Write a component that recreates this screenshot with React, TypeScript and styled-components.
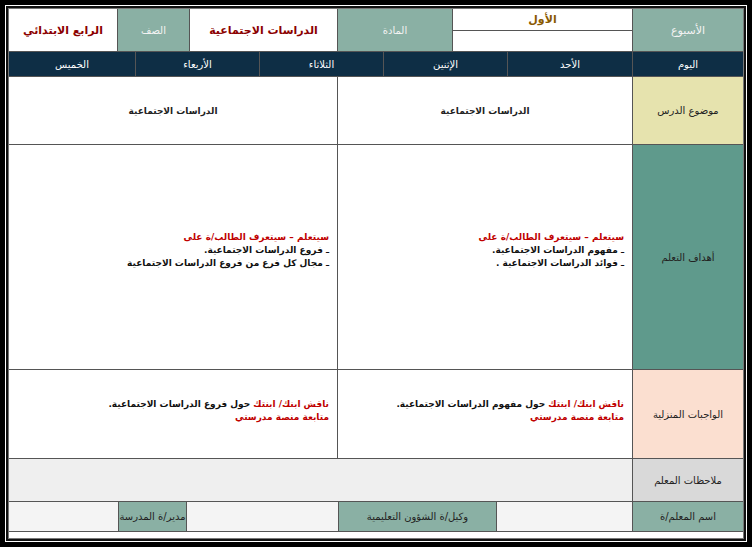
import React from "react";
import styled, { createGlobalStyle } from "styled-components";

const G = createGlobalStyle`
  html,body{margin:0;padding:0;background:#000;}
  *{box-sizing:border-box;}
`;
const Frame = styled.div`
  width:752px;height:547px;background:#000;padding:5px;
`;
const Inner = styled.div`
  width:100%;height:100%;border:1px solid #fff;background:#111;padding:2px;
`;
const Sheet = styled.div`
  width:100%;height:100%;background:#fff;border:1px solid #777;
  display:flex;flex-direction:column;direction:rtl;
  font-family:"DejaVu Sans","Noto Sans",sans-serif;font-size:10px;color:#111;
`;
const Row = styled.div<{ h: number }>`
  display:flex;height:${p => p.h}px;flex:none;
`;
const Cell = styled.div<{ w?: number; bg?: string; color?: string; bold?: boolean; size?: number; align?: string }>`
  ${p => (p.w ? `width:${p.w}px;flex:none;` : "flex:1;")}
  background:${p => p.bg || "#fff"};
  color:${p => p.color || "#222"};
  font-weight:${p => (p.bold ? 700 : 400)};
  font-size:${p => p.size || 10}px;
  border-left:1px solid #555;border-bottom:1px solid #555;
  display:flex;align-items:center;justify-content:${p => p.align || "center"};
  &:last-child{border-left:none;}
`;
const Split = styled.div<{ w: number }>`
  width:${p => p.w}px;flex:none;display:flex;flex-direction:column;
  border-left:1px solid #555;border-bottom:1px solid #555;
`;
const SplitPart = styled.div`
  flex:1;display:flex;align-items:center;justify-content:center;
  color:#8a5a00;font-weight:700;font-size:11px;
  &:first-child{border-bottom:1px solid #555;}
`;
const Block = styled.div<{ pad: number }>`
  flex:1;border-left:1px solid #555;border-bottom:1px solid #555;
  padding:${p => p.pad}px 8px 0 0;font-weight:700;font-size:9px;line-height:13px;
  &:last-child{border-left:none;}
`;
const Red = styled.span`color:#c00000;`;

const teal = "#8ab0a4";
const navy = "#0e2e45";

export default function App() {
  return (
    <Frame><G /><Inner><Sheet>
      <Row h={43}>
        <Cell w={111} bg={teal} color="#f3f3f3" size={11}>الأسبوع</Cell>
        <Split w={180}><SplitPart>الأول</SplitPart><SplitPart /></Split>
        <Cell w={115} bg={teal} color="#f3f3f3">المادة</Cell>
        <Cell w={148} color="#8b0000" bold size={11}>الدراسات الاجتماعية</Cell>
        <Cell w={72} bg={teal} color="#f3f3f3">الصف</Cell>
        <Cell color="#8b0000" bold size={11}>الرابع الابتدائي</Cell>
      </Row>
      <Row h={25}>
        {[["اليوم",111],["الأحد",125],["الإثنين",124],["الثلاثاء",124],["الأربعاء",124],["الخميس",0]].map(([t,w]) => (
          <Cell key={t as string} w={(w as number) || undefined} bg={navy} color="#fff" size={10}>{t}</Cell>
        ))}
      </Row>
      <Row h={68}>
        <Cell w={111} bg="#e6e3ae">موضوع الدرس</Cell>
        <Cell w={295} bold size={9}>الدراسات الاجتماعية</Cell>
        <Cell bold size={9}>الدراسات الاجتماعية</Cell>
      </Row>
      <Row h={225}>
        <Cell w={111} bg="#5f9a8c">أهداف التعلم</Cell>
        <Block pad={86} style={{ flex: "none", width: 295 }}>
          <Red>سيتعلم – سيتعرف الطالب/ة على</Red><br />
          ـ مفهوم الدراسات الاجتماعية.<br />
          ـ فوائد الدراسات الاجتماعية .
        </Block>
        <Block pad={86}>
          <Red>سيتعلم – سيتعرف الطالب/ة على</Red><br />
          ـ فروع الدراسات الاجتماعية.<br />
          ـ مجال كل فرع من فروع الدراسات الاجتماعية
        </Block>
      </Row>
      <Row h={89}>
        <Cell w={111} bg="#fbdfd0">الواجبات المنزلية</Cell>
        <Block pad={28} style={{ flex: "none", width: 295 }}>
          <Red>ناقش ابنك/ ابنتك</Red> حول مفهوم الدراسات الاجتماعية.<br />
          <Red>متابعة منصة مدرستي</Red>
        </Block>
        <Block pad={28}>
          <Red>ناقش ابنك/ ابنتك</Red> حول فروع الدراسات الاجتماعية.<br />
          <Red>متابعة منصة مدرستي</Red>
        </Block>
      </Row>
      <Row h={43}>
        <Cell w={111} bg="#d9d9d9">ملاحظات المعلم</Cell>
        <Cell bg="#efefef" />
      </Row>
      <Row h={30}>
        <Cell w={111} bg={teal}>اسم المعلم/ة</Cell>
        <Cell w={136} bg="#f4f4f4" />
        <Cell w={158} bg={teal}>وكيل/ة الشؤون التعليمية</Cell>
        <Cell w={152} bg="#f4f4f4" />
        <Cell w={68} bg={teal}>مدير/ة المدرسة</Cell>
        <Cell bg="#f4f4f4" />
      </Row>
    </Sheet></Inner></Frame>
  );
}
